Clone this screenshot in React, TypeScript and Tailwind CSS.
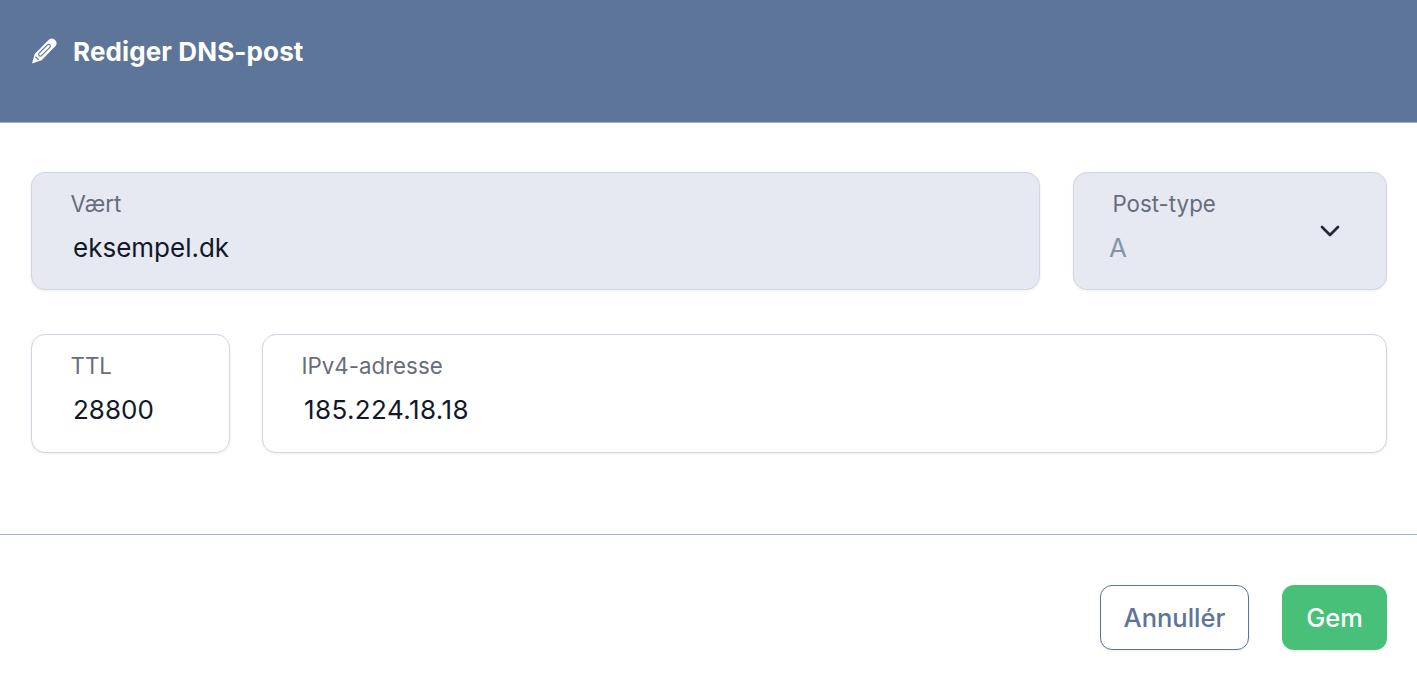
import { ChevronDown } from 'lucide-react';

function PencilIcon() {
  return (
    <svg viewBox="0 0 26 26" className="w-[26px] h-[26px] shrink-0" fill="none">
      <path d="M18 1.6A4.6 4.6 0 0 1 24.5 8L10.6 22.3 1 25.4 3.7 15.9Z" fill="#fff" />
      <path d="M17.6 8.2 9.4 16.4" stroke="#5d7598" strokeWidth="4.6" strokeLinecap="round" />
      <path d="M17.6 8.2 9.4 16.4" stroke="#fff" strokeWidth="2.4" strokeLinecap="round" />
      <path d="M4.4 18.6 7.6 21.8" stroke="#5d7598" strokeWidth="1.2" />
    </svg>
  );
}

interface FieldProps {
  label: string;
  value: string;
  className?: string;
  valueClassName?: string;
  disabled?: boolean;
}

function Field({ label, value, className = '', valueClassName = '', disabled = false }: FieldProps) {
  return (
    <div
      className={`rounded-[14px] border border-[#cdd6e2] pl-[38.5px] pr-4 pt-[18px] shadow-[0_1px_3px_rgba(15,23,42,0.07)] ${
        disabled ? 'bg-[#e6e9f1]' : 'bg-white'
      } ${className}`}
    >
      <div className="text-[22.3px] leading-[26px] text-[#676c7b]">{label}</div>
      <div className={`mt-[15px] ml-[2.5px] text-[26px] leading-[31px] text-[#111827] ${valueClassName}`}>{value}</div>
    </div>
  );
}

export default function App() {
  return (
    <div className="w-[1417px] h-[680px] bg-white overflow-hidden font-['Inter',sans-serif]">
      <div className="h-[123px] bg-[#5d7598] pl-[31px] pt-[36px] flex items-start gap-[16px] border-b border-[#a3b2c8]">
        <div className="pt-[2px]">
          <PencilIcon />
        </div>
        <h1 className="pt-[1px] text-[26px] leading-[30px] font-bold tracking-[0.12px] text-white">Rediger DNS-post</h1>
      </div>

      <div className="pl-[31px] pr-[30px] pt-[49px] flex flex-col gap-[44px]">
        <div className="flex gap-[33px]">
          <Field label="Vært" value="eksempel.dk" disabled className="w-[1009px] h-[118px]" />
          <div className="flex-1 h-[118px] rounded-[14px] border border-[#cdd6e2] bg-[#e6e9f1] pt-[18px] pl-[38.5px] pr-[40px] shadow-[0_1px_3px_rgba(15,23,42,0.07)] flex justify-between">
            <div>
              <div className="text-[22.3px] leading-[26px] text-[#676c7b]">Post-type</div>
              <div className="mt-[15px] -ml-[3.5px] text-[26px] leading-[31px] text-[#8296a8]">A</div>
            </div>
            <ChevronDown className="mt-[24px] w-[32px] h-[32px] text-[#1f2937]" strokeWidth={2} />
          </div>
        </div>
        <div className="flex gap-[32px]">
          <Field label="TTL" value="28800" className="w-[199px] h-[118.5px]" />
          <Field label="IPv4-adresse" value="185.224.18.18" valueClassName="tracking-[0.4px]" className="flex-1 h-[118.5px]" />
        </div>
      </div>

      <div className="mt-[81.5px] border-t border-[#a3b2c8] pt-[50px] pr-[30px] flex justify-end gap-[33px]">
        <button className="w-[149px] h-[65px] rounded-[12px] border border-[#5d7598] bg-white pt-[1px] text-[25.5px] font-medium text-[#5d7598] shadow-[0_1px_3px_rgba(15,23,42,0.07)]">
          Annullér
        </button>
        <button className="w-[105px] h-[65px] rounded-[12px] bg-[#48c07a] pt-[1px] text-[25.5px] font-medium text-white shadow-[0_1px_3px_rgba(15,23,42,0.07)]">
          Gem
        </button>
      </div>
    </div>
  );
}
